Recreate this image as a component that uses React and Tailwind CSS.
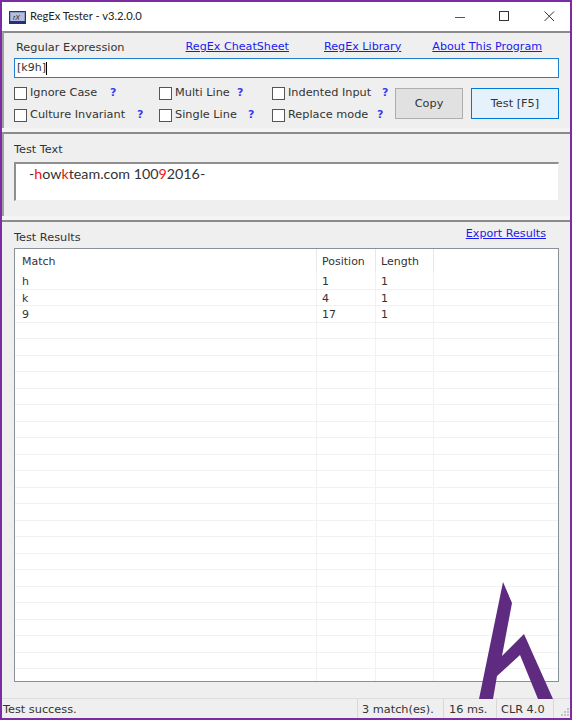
const ui = { fontFamily: '"DejaVu Sans", sans-serif' };

function Check({ label, q }) {
  return (
    <div className="flex items-center">
      <span className="w-[13px] h-[13px] border border-[#555] bg-white shrink-0" />
      <span className="ml-[3px] text-[11.3px] text-[#333] whitespace-nowrap" style={{ width: q }}>{label}</span>
      <span className="text-[11px] text-[#3c3cf0] font-bold whitespace-nowrap">?</span>
    </div>
  );
}

function Link({ children, className = "" }) {
  return <a className={"text-[11.15px] text-[#1a1aee] underline whitespace-nowrap " + className}>{children}</a>;
}

function Row({ a, b, c, head }) {
  const line = head ? "border-[#e8e8e8]" : "border-[#f2f2f2]";
  return (
    <div className={"flex text-[11px] text-[#333] " + (head ? "h-[24px] items-center" : "h-[16.5px] items-center border-b border-[#f2f2f2]")}>
      <div className={"w-[302px] h-full flex items-center pl-[7px] pt-[3px] border-r " + line}>{a}</div>
      <div className={"w-[59px] h-full flex items-center pl-[5px] pt-[3px] border-r " + line}>{b}</div>
      <div className={"w-[58px] h-full flex items-center pl-[5px] pt-[3px] border-r " + line}>{c}</div>
      <div className="flex-1" />
    </div>
  );
}

export default function App() {
  const rows = [["h", "1", "1"], ["k", "4", "1"], ["9", "17", "1"]];
  for (let i = 0; i < 22; i++) rows.push(["", "", ""]);
  return (
    <div className="relative w-[572px] h-[720px] overflow-hidden bg-[#f0f0f0] border-2 border-[#7b2ca3] flex flex-col" style={ui}>
      {/* Title bar */}
      <div className="h-[29px] bg-white flex items-center shrink-0 pl-[7px]">
        <svg width="17" height="13" viewBox="0 0 17 13" className="shrink-0 mt-[1px]">
          <rect x="0.5" y="0.5" width="16" height="12" fill="#8e9ac4" stroke="#27307a" />
          <rect x="2" y="2" width="13" height="9" fill="#b9bed8" />
          <rect x="0.5" y="10" width="16" height="2.5" fill="#27307a" />
          <text x="4" y="9" fontSize="7" fontStyle="italic" fill="#222" fontFamily="Liberation Sans">rX</text>
        </svg>
        <span className="ml-[4px] -mt-[1px] text-[11.2px] text-[#222]" style={{ fontFamily: 'Lato, sans-serif' }}>RegEx Tester - v3.2.0.0</span>
        <div className="ml-auto flex items-center">
          <svg width="11" height="11" viewBox="0 0 11 11" className="mr-[33px]"><path d="M0 6.5h10" stroke="#555" strokeWidth="1" /></svg>
          <svg width="11" height="11" viewBox="0 0 11 11" className="mr-[34px]"><rect x="0.5" y="0.5" width="9" height="9" fill="none" stroke="#333" /></svg>
          <svg width="11" height="11" viewBox="0 0 11 11" className="mr-[15px]"><path d="M0.5 0.5l9.5 9.5M10 0.5L0.5 10" stroke="#333" strokeWidth="1" /></svg>
        </div>
      </div>

      {/* Regex panel */}
      <div className="h-[97px] shrink-0 bg-[#efefef] border-t-2 border-[#8a8a8a] border-l-2 border-l-[#a0a0a0] pl-[10px] pr-[11px]">
        <div className="flex items-center h-[25px] pt-[3px]">
          <span className="ml-[2px] text-[11.33px] text-[#333] whitespace-nowrap">Regular Expression</span>
          <Link className="ml-[61px]">RegEx CheatSheet</Link>
          <Link className="ml-[35px]">RegEx Library</Link>
          <Link className="ml-[31px]">About This Program</Link>
        </div>
        <div className="h-[20px] bg-white border border-[#1f7fd0] flex items-center pl-[2px] text-[11px] text-[#333]">
          [k9h]<span className="w-px h-[13px] bg-black" />
        </div>
        <div className="flex mt-[10px]">
          <div className="flex flex-col gap-[5px] w-[145px] -mt-[3px]">
            <Check label="Ignore Case" q={80} />
            <Check label="Culture Invariant" q={107} />
          </div>
          <div className="flex flex-col gap-[5px] w-[113px] -mt-[3px]">
            <Check label="Multi Line" q={62} />
            <Check label="Single Line" q={73} />
          </div>
          <div className="flex flex-col gap-[5px] w-[123px] -mt-[3px]">
            <Check label="Indented Input" q={94} />
            <Check label="Replace mode" q={89} />
          </div>
          <button className="w-[68px] h-[31px] pt-[1px] bg-[#e1e1e1] border border-[#adadad] text-[11.3px] text-[#333]">Copy</button>
          <button className="w-[88px] h-[31px] pt-[1px] ml-[8px] bg-[#e5f1fb] border border-[#0078d7] text-[11.3px] text-[#333]">Test [F5]</button>
        </div>
      </div>

      <div className="h-[4px] shrink-0 bg-[#f4f4f4]" />

      {/* Test text panel */}
      <div className="h-[84px] shrink-0 bg-[#efefef] border-t-2 border-[#8a8a8a] border-l-2 border-l-[#a0a0a0] pl-[10px] pr-[11px]">
        <div className="h-[28px] flex items-center pt-[4px] text-[11.3px] text-[#333]">Test Text</div>
        <div className="h-[39px] bg-white border-t-2 border-l-2 border-[#8f8f8f] border-r border-b border-r-[#eeeeee] border-b-[#eeeeee] pl-[13px] text-[14.27px] leading-[20px] text-[#333]" style={{ fontFamily: 'Lato, sans-serif' }}>
          -<span className="text-[#f01010]">h</span>ow<span className="text-[#f01010]">k</span>team.com 100<span className="text-[#f01010]">9</span>2016-
        </div>
      </div>

      <div className="h-[4px] shrink-0 bg-[#f4f4f4]" />

      {/* Results panel */}
      <div className="flex-1 min-h-0 bg-[#efefef] border-t-2 border-[#8a8a8a] pl-[12px] pr-[11px] flex flex-col">
        <div className="h-[26px] shrink-0 flex items-center justify-between pt-[6px]">
          <span className="text-[11.3px] text-[#333]">Test Results</span>
          <Link className="mr-[13px] -mt-[8px]">Export Results</Link>
        </div>
        <div className="h-[434px] shrink-0 bg-white border border-[#8a9099] overflow-hidden">
          <Row a="Match" b="Position" c="Length" head />
          {rows.map((r, i) => <Row key={i} a={r[0]} b={r[1]} c={r[2]} />)}
        </div>
      </div>

      {/* Status bar */}
      <div className="relative h-[20px] shrink-0 flex items-center bg-[#efefef] border-t border-[#dedede] text-[11.3px] text-[#333]">
        <span className="ml-[1px] w-[354px] h-full flex items-center pt-[3px]">Test success.</span>
        <span className="w-[86px] h-full flex items-center pl-[4px] pt-[3px] border-l border-[#d8d8d8]">3 match(es).</span>
        <span className="w-[53px] h-full flex items-center pl-[5px] pt-[3px] border-l border-[#d8d8d8]">16 ms.</span>
        <span className="w-[58px] h-full flex items-center pl-[4px] pt-[3px] border-x border-[#d8d8d8]">CLR 4.0</span>
        <svg width="9" height="9" viewBox="0 0 9 9" className="absolute right-[0px] bottom-[1px]">
          <path d="M6 0h2v2H6zM3 3h2v2H3zM6 3h2v2H6zM0 6h2v2H0zM3 6h2v2H3zM6 6h2v2H6z" fill="#c4c4c4" />
        </svg>
      </div>

      {/* Watermark */}
      <svg className="absolute left-[-2px] top-[-2px] pointer-events-none" width="572" height="720" viewBox="0 0 572 720">
        <polygon fill="#5f2b80" points="503,582 512,603 502,656 524,634 553,699 538,699 520,655 497,676 493,699 479,699" />
      </svg>
    </div>
  );
}
